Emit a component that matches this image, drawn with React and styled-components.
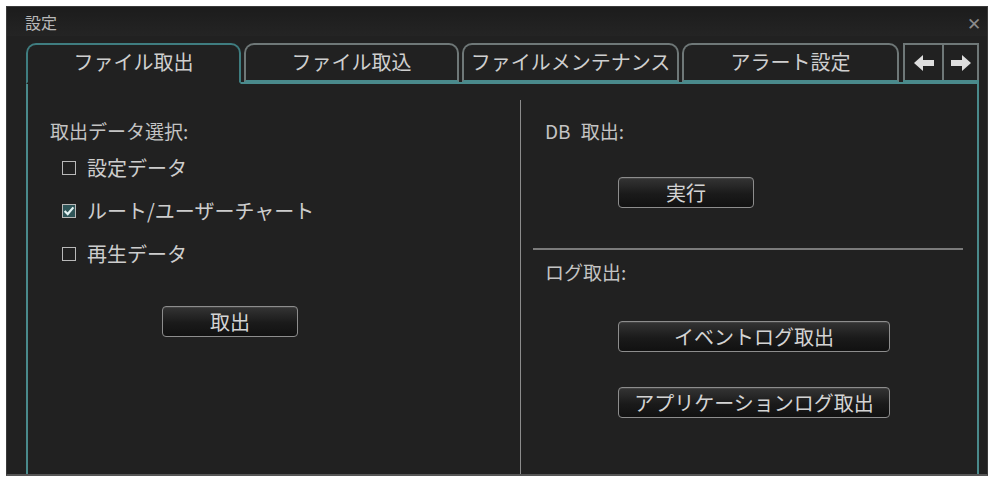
import React from "react";
import styled, { createGlobalStyle } from "styled-components";

const GlobalStyle = createGlobalStyle`
  html, body {
    margin: 0;
    padding: 0;
    background: #ffffff;
  }
  body {
    font-family: "Noto Sans CJK JP", "Noto Sans", "Liberation Sans", sans-serif;
  }
`;

const Dialog = styled.div`
  margin: 6px 0 0 6px;
  width: 982px;
  height: 470px;
  box-sizing: border-box;
  background: #212121;
  border: 1px solid #3a3a3a;
  border-bottom: 2px solid #555;
  display: flex;
  flex-direction: column;
  overflow: hidden;
  color: #c9c9c9;
`;

const TitleBar = styled.div`
  height: 29px;
  padding: 0 6px 0 18px;
  display: flex;
  align-items: center;
  justify-content: space-between;
  background: linear-gradient(#1c1c1c, #242424);
  font-size: 16px;
  color: #b8b8b8;
`;

const Close = styled.span`
  font-family: "DejaVu Sans", sans-serif;
  font-size: 17px;
  font-weight: 300;
  color: #8a8a8a;
  margin-top: 4px;
`;

const TabRow = styled.div`
  display: flex;
  align-items: flex-end;
  gap: 3px;
  margin-top: 7px;
  padding-left: 19px;
  height: 39px;
`;

const Tab = styled.div`
  width: ${(p) => p.$w}px;
  box-sizing: border-box;
  display: flex;
  align-items: center;
  justify-content: center;
  font-size: 20px;
  white-space: nowrap;
  color: #cfcfcf;
  border: 2px solid ${(p) => (p.$active ? "#3f7d80" : "#6f7878")};
  border-bottom: ${(p) => (p.$active ? "2px solid #212121" : "2px solid #4a8a8c")};
  border-radius: 10px 10px 0 0;
  position: relative;
  z-index: ${(p) => (p.$active ? 2 : 1)};
  margin-bottom: ${(p) => (p.$active ? "-2px" : "0")};
  height: ${(p) => (p.$active ? "41px" : "39px")};
  padding-bottom: ${(p) => (p.$active ? "4px" : "2px")};
`;

const ArrowGroup = styled.div`
  display: flex;
  margin-left: 1px;
  height: 39px;
  border-bottom: 2px solid #4a8a8c;
  box-sizing: border-box;
`;

const ArrowBtn = styled.div`
  width: ${(p) => p.$w}px;
  height: 37px;
  display: flex;
  align-items: center;
  justify-content: center;
  border-top: 2px solid #6f7878;
  border-left: 2px solid #6f7878;
  box-sizing: border-box;
  &:last-child {
    border-right: 2px solid #6f7878;
  }
`;

const Panel = styled.div`
  flex: 1;
  margin: 0 8px 0 19px;
  border: 2px solid #4a8a8c;
  border-bottom: none;
  display: flex;
  position: relative;
  z-index: 1;
`;

const LeftCol = styled.div`
  width: 492px;
  padding: 34px 0 0 22px;
  box-sizing: border-box;
`;

const Divider = styled.div`
  width: 1px;
  margin-top: 16px;
  background: #8c8c8c;
`;

const RightCol = styled.div`
  flex: 1;
  padding-top: 34px;
  display: flex;
  flex-direction: column;
`;

const Label = styled.div`
  font-size: 19px;
  line-height: 26px;
  word-spacing: 6px;
  padding-left: ${(p) => p.$indent || 0}px;
  margin-top: ${(p) => p.$top || 0}px;
  color: #c4c4c4;
`;

const CheckList = styled.div`
  display: flex;
  flex-direction: column;
  gap: 17px;
  margin: 11px 0 0 12px;
`;

const CheckRow = styled.label`
  display: flex;
  align-items: center;
  gap: 11px;
  font-size: 20px;
  line-height: 26px;
  color: #cdcdcd;
`;

const Box = styled.span`
  width: 14px;
  height: 14px;
  box-sizing: border-box;
  border: 1px solid #b9b9b9;
  background: ${(p) => (p.$checked ? "#2f5558" : "transparent")};
  display: inline-flex;
  align-items: center;
  justify-content: center;
`;

const ButtonWrap = styled.div`
  padding-left: ${(p) => p.$left}px;
  margin-top: ${(p) => p.$top}px;
`;

const Button = styled.div`
  width: ${(p) => p.$w}px;
  height: 31px;
  box-sizing: border-box;
  border: 1px solid #8d8d8d;
  border-radius: 4px;
  background: linear-gradient(#343434, #1a1a1a 55%, #111);
  box-shadow: inset 0 1px 0 rgba(255, 255, 255, 0.08);
  display: flex;
  align-items: center;
  justify-content: center;
  font-size: 20px;
  font-weight: 400;
  color: #d4d4d4;
  white-space: nowrap;
`;

const Rule = styled.div`
  height: 2px;
  background: #7b7b7b;
  margin: 40px 14px 0 12px;
`;

const Arrow = ({ dir }) => (
  <svg width="22" height="18" viewBox="0 0 22 18">
    <path
      d={
        dir === "left"
          ? "M1 9 L10 1 L10 6 L21 6 L21 12 L10 12 L10 17 Z"
          : "M21 9 L12 1 L12 6 L1 6 L1 12 L12 12 L12 17 Z"
      }
      fill="#dedede"
    />
  </svg>
);

const Check = () => (
  <svg width="12" height="12" viewBox="0 0 11 11">
    <path d="M1.5 5.5 L4.3 8.3 L9.5 2.2" stroke="#e4f4f4" strokeWidth="2" fill="none" />
  </svg>
);

const tabs = [
  { label: "ファイル取出", w: 215, active: true },
  { label: "ファイル取込", w: 215 },
  { label: "ファイルメンテナンス", w: 217 },
  { label: "アラート設定", w: 217 },
];

const items = [
  { label: "設定データ", checked: false },
  { label: "ルート/ユーザーチャート", checked: true },
  { label: "再生データ", checked: false },
];

export default function App() {
  return (
    <>
      <GlobalStyle />
      <Dialog>
        <TitleBar>
          <span>設定</span>
          <Close>✕</Close>
        </TitleBar>
        <TabRow>
          {tabs.map((t) => (
            <Tab key={t.label} $w={t.w} $active={t.active}>
              {t.label}
            </Tab>
          ))}
          <ArrowGroup>
            <ArrowBtn $w={39}>
              <Arrow dir="left" />
            </ArrowBtn>
            <ArrowBtn $w={37}>
              <Arrow dir="right" />
            </ArrowBtn>
          </ArrowGroup>
        </TabRow>
        <Panel>
          <LeftCol>
            <Label>取出データ選択:</Label>
            <CheckList>
              {items.map((it) => (
                <CheckRow key={it.label}>
                  <Box $checked={it.checked}>{it.checked && <Check />}</Box>
                  {it.label}
                </CheckRow>
              ))}
            </CheckList>
            <ButtonWrap $left={112} $top={39}>
              <Button $w={136}>取出</Button>
            </ButtonWrap>
          </LeftCol>
          <Divider />
          <RightCol>
            <Label $indent={24}>DB 取出:</Label>
            <ButtonWrap $left={97} $top={33}>
              <Button $w={136}>実行</Button>
            </ButtonWrap>
            <Rule />
            <Label $indent={24} $top={9}>
              ログ取出:
            </Label>
            <ButtonWrap $left={97} $top={36}>
              <Button $w={272}>イベントログ取出</Button>
            </ButtonWrap>
            <ButtonWrap $left={97} $top={35}>
              <Button $w={272}>アプリケーションログ取出</Button>
            </ButtonWrap>
          </RightCol>
        </Panel>
      </Dialog>
    </>
  );
}
